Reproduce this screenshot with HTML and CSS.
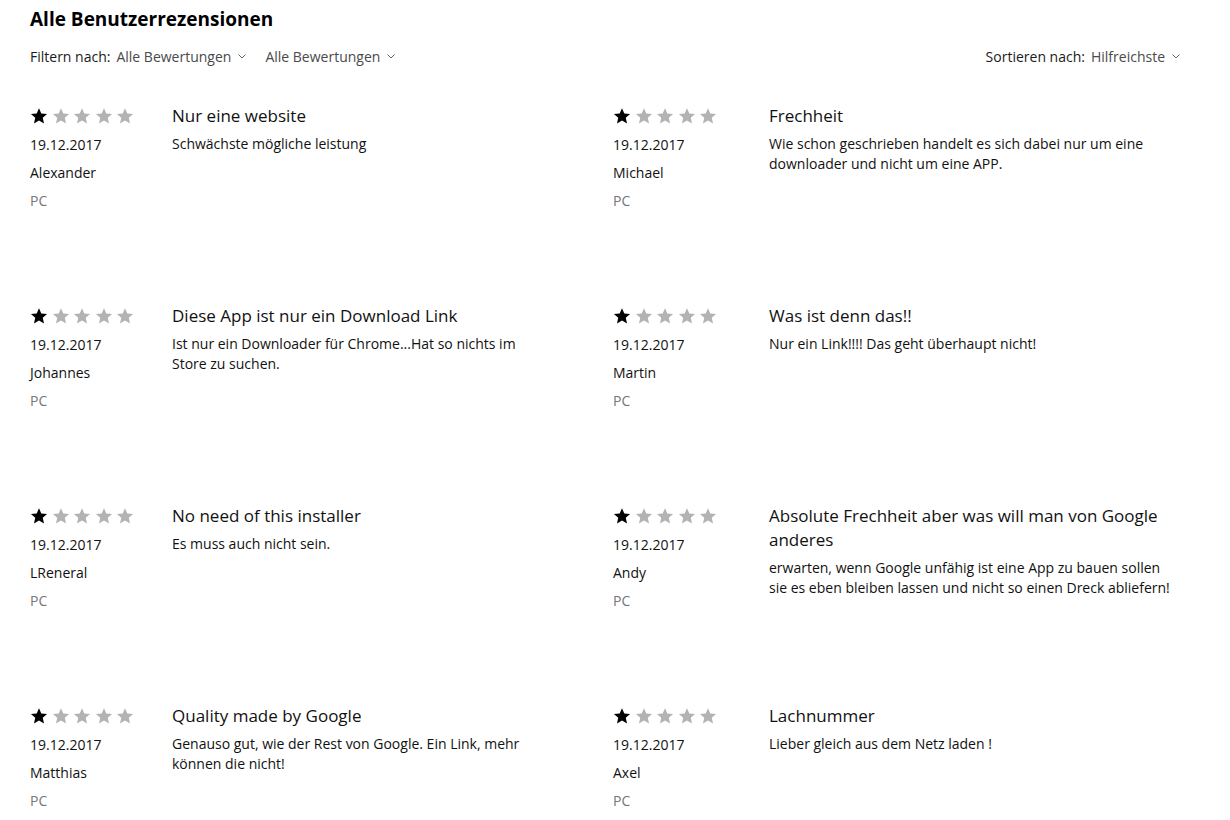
FILE: index.html
```html
<!DOCTYPE html>
<html lang="de">
<head>
<meta charset="utf-8">
<title>Alle Benutzerrezensionen</title>
<link rel="stylesheet" href="styles.css">
</head>
<body>
<div class="page">
  <h1 class="heading">Alle Benutzerrezensionen</h1>
  <div class="toolbar">
    <div class="filters">
      <span class="label">Filtern nach:</span>
      <span class="dropdown">Alle Bewertungen <svg class="chev" viewBox="0 0 8 5" width="8" height="5"><path d="M0.5 0.5 L4 4 L7.5 0.5" fill="none" stroke="currentColor" stroke-width="1"/></svg></span>
      <span class="dropdown">Alle Bewertungen <svg class="chev" viewBox="0 0 8 5" width="8" height="5"><path d="M0.5 0.5 L4 4 L7.5 0.5" fill="none" stroke="currentColor" stroke-width="1"/></svg></span>
    </div>
    <div class="sort">
      <span class="label">Sortieren nach:</span>
      <span class="dropdown">Hilfreichste <svg class="chev" viewBox="0 0 8 5" width="8" height="5"><path d="M0.5 0.5 L4 4 L7.5 0.5" fill="none" stroke="currentColor" stroke-width="1"/></svg></span>
    </div>
  </div>

  <div class="reviews">
    <div class="review">
      <div class="meta">
        <div class="stars"><svg class="star on" viewBox="0 0 24 24"><polygon points="12,1.5 15.1,8.6 22.8,9.3 17,14.4 18.7,22 12,18 5.3,22 7,14.4 1.2,9.3 8.9,8.6"/></svg><svg class="star" viewBox="0 0 24 24"><polygon points="12,1.5 15.1,8.6 22.8,9.3 17,14.4 18.7,22 12,18 5.3,22 7,14.4 1.2,9.3 8.9,8.6"/></svg><svg class="star" viewBox="0 0 24 24"><polygon points="12,1.5 15.1,8.6 22.8,9.3 17,14.4 18.7,22 12,18 5.3,22 7,14.4 1.2,9.3 8.9,8.6"/></svg><svg class="star" viewBox="0 0 24 24"><polygon points="12,1.5 15.1,8.6 22.8,9.3 17,14.4 18.7,22 12,18 5.3,22 7,14.4 1.2,9.3 8.9,8.6"/></svg><svg class="star" viewBox="0 0 24 24"><polygon points="12,1.5 15.1,8.6 22.8,9.3 17,14.4 18.7,22 12,18 5.3,22 7,14.4 1.2,9.3 8.9,8.6"/></svg></div>
        <div class="date">19.12.2017</div>
        <div class="name">Alexander</div>
        <div class="device">PC</div>
      </div>
      <div class="content">
        <div class="title">Nur eine website</div>
        <div class="text">Schwächste mögliche leistung</div>
      </div>
    </div>
    <div class="review">
      <div class="meta">
        <div class="stars"><svg class="star on" viewBox="0 0 24 24"><polygon points="12,1.5 15.1,8.6 22.8,9.3 17,14.4 18.7,22 12,18 5.3,22 7,14.4 1.2,9.3 8.9,8.6"/></svg><svg class="star" viewBox="0 0 24 24"><polygon points="12,1.5 15.1,8.6 22.8,9.3 17,14.4 18.7,22 12,18 5.3,22 7,14.4 1.2,9.3 8.9,8.6"/></svg><svg class="star" viewBox="0 0 24 24"><polygon points="12,1.5 15.1,8.6 22.8,9.3 17,14.4 18.7,22 12,18 5.3,22 7,14.4 1.2,9.3 8.9,8.6"/></svg><svg class="star" viewBox="0 0 24 24"><polygon points="12,1.5 15.1,8.6 22.8,9.3 17,14.4 18.7,22 12,18 5.3,22 7,14.4 1.2,9.3 8.9,8.6"/></svg><svg class="star" viewBox="0 0 24 24"><polygon points="12,1.5 15.1,8.6 22.8,9.3 17,14.4 18.7,22 12,18 5.3,22 7,14.4 1.2,9.3 8.9,8.6"/></svg></div>
        <div class="date">19.12.2017</div>
        <div class="name">Michael</div>
        <div class="device">PC</div>
      </div>
      <div class="content">
        <div class="title">Frechheit</div>
        <div class="text">Wie schon geschrieben handelt es sich dabei nur um eine downloader und nicht um eine APP.</div>
      </div>
    </div>

    <div class="review">
      <div class="meta">
        <div class="stars"><svg class="star on" viewBox="0 0 24 24"><polygon points="12,1.5 15.1,8.6 22.8,9.3 17,14.4 18.7,22 12,18 5.3,22 7,14.4 1.2,9.3 8.9,8.6"/></svg><svg class="star" viewBox="0 0 24 24"><polygon points="12,1.5 15.1,8.6 22.8,9.3 17,14.4 18.7,22 12,18 5.3,22 7,14.4 1.2,9.3 8.9,8.6"/></svg><svg class="star" viewBox="0 0 24 24"><polygon points="12,1.5 15.1,8.6 22.8,9.3 17,14.4 18.7,22 12,18 5.3,22 7,14.4 1.2,9.3 8.9,8.6"/></svg><svg class="star" viewBox="0 0 24 24"><polygon points="12,1.5 15.1,8.6 22.8,9.3 17,14.4 18.7,22 12,18 5.3,22 7,14.4 1.2,9.3 8.9,8.6"/></svg><svg class="star" viewBox="0 0 24 24"><polygon points="12,1.5 15.1,8.6 22.8,9.3 17,14.4 18.7,22 12,18 5.3,22 7,14.4 1.2,9.3 8.9,8.6"/></svg></div>
        <div class="date">19.12.2017</div>
        <div class="name">Johannes</div>
        <div class="device">PC</div>
      </div>
      <div class="content">
        <div class="title">Diese App ist nur ein Download Link</div>
        <div class="text">Ist nur ein Downloader für Chrome...Hat so nichts im Store zu suchen.</div>
      </div>
    </div>
    <div class="review">
      <div class="meta">
        <div class="stars"><svg class="star on" viewBox="0 0 24 24"><polygon points="12,1.5 15.1,8.6 22.8,9.3 17,14.4 18.7,22 12,18 5.3,22 7,14.4 1.2,9.3 8.9,8.6"/></svg><svg class="star" viewBox="0 0 24 24"><polygon points="12,1.5 15.1,8.6 22.8,9.3 17,14.4 18.7,22 12,18 5.3,22 7,14.4 1.2,9.3 8.9,8.6"/></svg><svg class="star" viewBox="0 0 24 24"><polygon points="12,1.5 15.1,8.6 22.8,9.3 17,14.4 18.7,22 12,18 5.3,22 7,14.4 1.2,9.3 8.9,8.6"/></svg><svg class="star" viewBox="0 0 24 24"><polygon points="12,1.5 15.1,8.6 22.8,9.3 17,14.4 18.7,22 12,18 5.3,22 7,14.4 1.2,9.3 8.9,8.6"/></svg><svg class="star" viewBox="0 0 24 24"><polygon points="12,1.5 15.1,8.6 22.8,9.3 17,14.4 18.7,22 12,18 5.3,22 7,14.4 1.2,9.3 8.9,8.6"/></svg></div>
        <div class="date">19.12.2017</div>
        <div class="name">Martin</div>
        <div class="device">PC</div>
      </div>
      <div class="content">
        <div class="title">Was ist denn das!!</div>
        <div class="text">Nur ein Link!!!! Das geht überhaupt nicht!</div>
      </div>
    </div>

    <div class="review">
      <div class="meta">
        <div class="stars"><svg class="star on" viewBox="0 0 24 24"><polygon points="12,1.5 15.1,8.6 22.8,9.3 17,14.4 18.7,22 12,18 5.3,22 7,14.4 1.2,9.3 8.9,8.6"/></svg><svg class="star" viewBox="0 0 24 24"><polygon points="12,1.5 15.1,8.6 22.8,9.3 17,14.4 18.7,22 12,18 5.3,22 7,14.4 1.2,9.3 8.9,8.6"/></svg><svg class="star" viewBox="0 0 24 24"><polygon points="12,1.5 15.1,8.6 22.8,9.3 17,14.4 18.7,22 12,18 5.3,22 7,14.4 1.2,9.3 8.9,8.6"/></svg><svg class="star" viewBox="0 0 24 24"><polygon points="12,1.5 15.1,8.6 22.8,9.3 17,14.4 18.7,22 12,18 5.3,22 7,14.4 1.2,9.3 8.9,8.6"/></svg><svg class="star" viewBox="0 0 24 24"><polygon points="12,1.5 15.1,8.6 22.8,9.3 17,14.4 18.7,22 12,18 5.3,22 7,14.4 1.2,9.3 8.9,8.6"/></svg></div>
        <div class="date">19.12.2017</div>
        <div class="name">LReneral</div>
        <div class="device">PC</div>
      </div>
      <div class="content">
        <div class="title">No need of this installer</div>
        <div class="text">Es muss auch nicht sein.</div>
      </div>
    </div>
    <div class="review">
      <div class="meta">
        <div class="stars"><svg class="star on" viewBox="0 0 24 24"><polygon points="12,1.5 15.1,8.6 22.8,9.3 17,14.4 18.7,22 12,18 5.3,22 7,14.4 1.2,9.3 8.9,8.6"/></svg><svg class="star" viewBox="0 0 24 24"><polygon points="12,1.5 15.1,8.6 22.8,9.3 17,14.4 18.7,22 12,18 5.3,22 7,14.4 1.2,9.3 8.9,8.6"/></svg><svg class="star" viewBox="0 0 24 24"><polygon points="12,1.5 15.1,8.6 22.8,9.3 17,14.4 18.7,22 12,18 5.3,22 7,14.4 1.2,9.3 8.9,8.6"/></svg><svg class="star" viewBox="0 0 24 24"><polygon points="12,1.5 15.1,8.6 22.8,9.3 17,14.4 18.7,22 12,18 5.3,22 7,14.4 1.2,9.3 8.9,8.6"/></svg><svg class="star" viewBox="0 0 24 24"><polygon points="12,1.5 15.1,8.6 22.8,9.3 17,14.4 18.7,22 12,18 5.3,22 7,14.4 1.2,9.3 8.9,8.6"/></svg></div>
        <div class="date">19.12.2017</div>
        <div class="name">Andy</div>
        <div class="device">PC</div>
      </div>
      <div class="content">
        <div class="title">Absolute Frechheit aber was will man von Google anderes</div>
        <div class="text">erwarten, wenn Google unfähig ist eine App zu bauen sollen sie es eben bleiben lassen und nicht so einen Dreck abliefern!</div>
      </div>
    </div>

    <div class="review">
      <div class="meta">
        <div class="stars"><svg class="star on" viewBox="0 0 24 24"><polygon points="12,1.5 15.1,8.6 22.8,9.3 17,14.4 18.7,22 12,18 5.3,22 7,14.4 1.2,9.3 8.9,8.6"/></svg><svg class="star" viewBox="0 0 24 24"><polygon points="12,1.5 15.1,8.6 22.8,9.3 17,14.4 18.7,22 12,18 5.3,22 7,14.4 1.2,9.3 8.9,8.6"/></svg><svg class="star" viewBox="0 0 24 24"><polygon points="12,1.5 15.1,8.6 22.8,9.3 17,14.4 18.7,22 12,18 5.3,22 7,14.4 1.2,9.3 8.9,8.6"/></svg><svg class="star" viewBox="0 0 24 24"><polygon points="12,1.5 15.1,8.6 22.8,9.3 17,14.4 18.7,22 12,18 5.3,22 7,14.4 1.2,9.3 8.9,8.6"/></svg><svg class="star" viewBox="0 0 24 24"><polygon points="12,1.5 15.1,8.6 22.8,9.3 17,14.4 18.7,22 12,18 5.3,22 7,14.4 1.2,9.3 8.9,8.6"/></svg></div>
        <div class="date">19.12.2017</div>
        <div class="name">Matthias</div>
        <div class="device">PC</div>
      </div>
      <div class="content">
        <div class="title">Quality made by Google</div>
        <div class="text">Genauso gut, wie der Rest von Google. Ein Link, mehr können die nicht!</div>
      </div>
    </div>
    <div class="review">
      <div class="meta">
        <div class="stars"><svg class="star on" viewBox="0 0 24 24"><polygon points="12,1.5 15.1,8.6 22.8,9.3 17,14.4 18.7,22 12,18 5.3,22 7,14.4 1.2,9.3 8.9,8.6"/></svg><svg class="star" viewBox="0 0 24 24"><polygon points="12,1.5 15.1,8.6 22.8,9.3 17,14.4 18.7,22 12,18 5.3,22 7,14.4 1.2,9.3 8.9,8.6"/></svg><svg class="star" viewBox="0 0 24 24"><polygon points="12,1.5 15.1,8.6 22.8,9.3 17,14.4 18.7,22 12,18 5.3,22 7,14.4 1.2,9.3 8.9,8.6"/></svg><svg class="star" viewBox="0 0 24 24"><polygon points="12,1.5 15.1,8.6 22.8,9.3 17,14.4 18.7,22 12,18 5.3,22 7,14.4 1.2,9.3 8.9,8.6"/></svg><svg class="star" viewBox="0 0 24 24"><polygon points="12,1.5 15.1,8.6 22.8,9.3 17,14.4 18.7,22 12,18 5.3,22 7,14.4 1.2,9.3 8.9,8.6"/></svg></div>
        <div class="date">19.12.2017</div>
        <div class="name">Axel</div>
        <div class="device">PC</div>
      </div>
      <div class="content">
        <div class="title">Lachnummer</div>
        <div class="text">Lieber gleich aus dem Netz laden !</div>
      </div>
    </div>
  </div>
</div>
</body>
</html>
```
FILE: styles.css
```css
html, body {
  margin: 0;
  padding: 0;
  background: #ffffff;
}

body {
  font-family: "Open Sans", "Noto Sans", sans-serif;
  color: #111111;
}

.page {
  padding: 6px 50px 0 30px;
}

.heading {
  margin: 0;
  font-size: 19px;
  font-weight: bold;
  line-height: 26px;
  color: #000000;
}

.toolbar {
  display: flex;
  justify-content: space-between;
  align-items: center;
  margin-top: 14px;
  height: 20px;
  font-size: 14px;
}

.filters, .sort {
  display: flex;
  align-items: center;
}

.label {
  color: #1a1a1a;
  margin-right: 6px;
}

.dropdown {
  color: #4a4a4a;
  display: inline-flex;
  align-items: center;
  margin-right: 19px;
}

.sort .dropdown {
  margin-right: 0;
}

.chev {
  margin-left: 7px;
  color: #666666;
}

.reviews {
  display: grid;
  grid-template-columns: 583px 1fr;
  margin-top: 40px;
}

.review {
  display: grid;
  grid-template-columns: 142px 365px;
  height: 200px;
}

.review:nth-child(even) {
  grid-template-columns: 156px 1fr;
}

.stars {
  display: flex;
  gap: 3.5px;
  height: 20px;
  align-items: center;
}

.star {
  width: 18px;
  height: 18px;
  fill: #b3b3b3;
}

.star.on {
  fill: #000000;
}

.date, .name, .device {
  font-size: 14px;
  line-height: 28px;
}

.date {
  margin-top: 5px;
}

.device {
  color: #777777;
}

.title {
  font-size: 17px;
  line-height: 24px;
  color: #111111;
  margin-top: -2px;
}

.text {
  font-size: 14px;
  line-height: 20px;
  margin-top: 6px;
  color: #111111;
}
```
